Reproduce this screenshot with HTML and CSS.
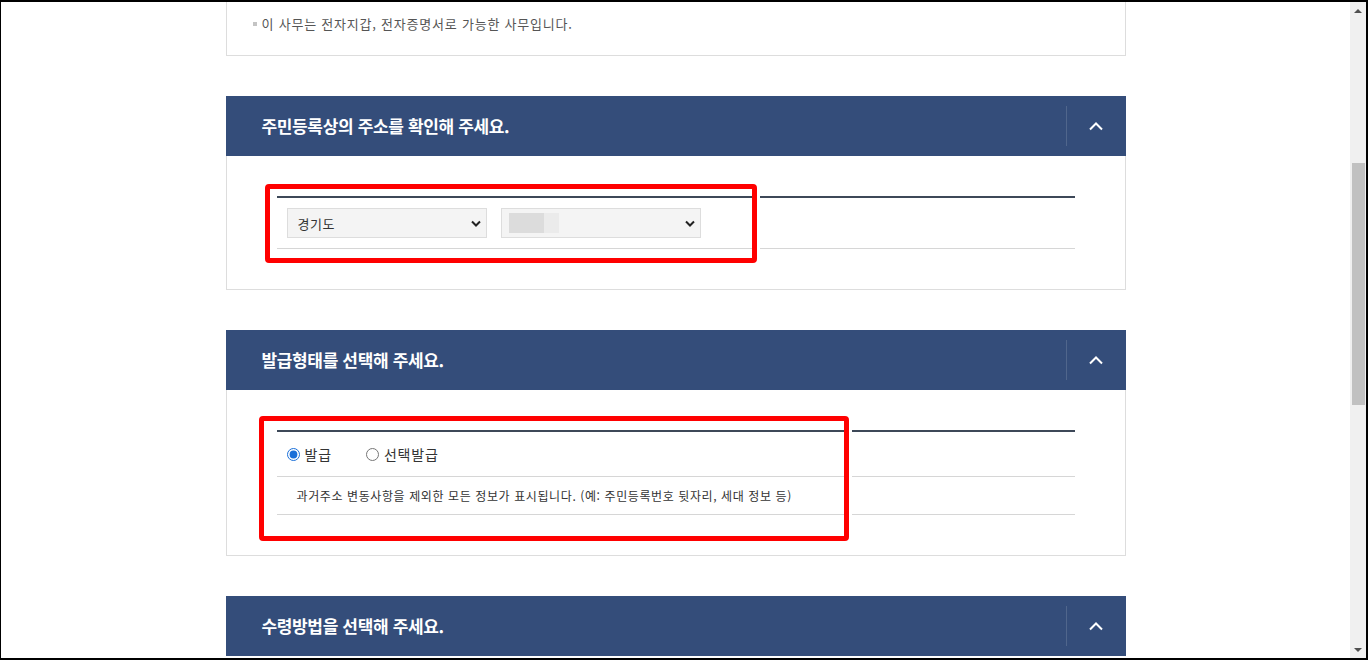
FILE: index.html
```html
<!DOCTYPE html>
<html lang="ko">
<head>
  <meta charset="UTF-8" />
  <meta name="viewport" content="width=device-width, initial-scale=1.0"/>
  <title>민원 신청</title>
  <link rel="stylesheet" href="styles.css">
</head>
<body>
  <div class="window">
    <div class="page">
      <div class="container">
        <ul class="notice">
          <li>이 사무는 전자지갑, 전자증명서로 가능한 사무입니다.</li>
        </ul>

        <section class="step">
          <div class="step-head">
            <h3 class="step-title">주민등록상의 주소를 확인해 주세요.</h3>
            <button class="toggle" type="button">
              <svg width="16" height="10" viewBox="0 0 16 10"><polyline points="2,8.5 8,2.5 14,8.5" fill="none" stroke="#fff" stroke-width="2"/></svg>
            </button>
          </div>
          <div class="step-body">
            <div class="form-table">
              <div class="form-row row-select">
                <div class="select-box">
                  <select><option>경기도</option></select>
                  <svg class="arrow-down" width="10" height="7" viewBox="0 0 10 7"><polyline points="1,1.5 5,5.5 9,1.5" fill="none" stroke="#222" stroke-width="2"/></svg>
                </div>
                <div class="select-box">
                  <select><option></option></select>
                  <span class="blur"></span>
                  <svg class="arrow-down" width="10" height="7" viewBox="0 0 10 7"><polyline points="1,1.5 5,5.5 9,1.5" fill="none" stroke="#222" stroke-width="2"/></svg>
                </div>
              </div>
            </div>
            <div class="mark mark-address"></div>
          </div>
        </section>

        <section class="step">
          <div class="step-head">
            <h3 class="step-title">발급형태를 선택해 주세요.</h3>
            <button class="toggle" type="button">
              <svg width="16" height="10" viewBox="0 0 16 10"><polyline points="2,8.5 8,2.5 14,8.5" fill="none" stroke="#fff" stroke-width="2"/></svg>
            </button>
          </div>
          <div class="step-body">
            <div class="form-table">
              <div class="form-row row-radio">
                <label class="radio"><input type="radio" name="type" checked> 발급</label>
                <label class="radio"><input type="radio" name="type"> 선택발급</label>
              </div>
              <div class="form-row row-desc">
                과거주소 변동사항을 제외한 모든 정보가 표시됩니다. (예: 주민등록번호 뒷자리, 세대 정보 등)
              </div>
            </div>
            <div class="mark mark-type"></div>
          </div>
        </section>

        <section class="step">
          <div class="step-head">
            <h3 class="step-title">수령방법을 선택해 주세요.</h3>
            <button class="toggle" type="button">
              <svg width="16" height="10" viewBox="0 0 16 10"><polyline points="2,8.5 8,2.5 14,8.5" fill="none" stroke="#fff" stroke-width="2"/></svg>
            </button>
          </div>
        </section>
      </div>
    </div>

    <div class="scrollbar">
      <div class="scroll-btn"><span class="tri-up"></span></div>
      <div class="scroll-track"><div class="scroll-thumb"></div></div>
      <div class="scroll-btn"><span class="tri-down"></span></div>
    </div>
  </div>
</body>
</html>
```

FILE: styles.css
```css
* {
  box-sizing: border-box;
}
body {
  font-family: "Noto Sans CJK KR", "Malgun Gothic", sans-serif;
  color: #333;
  background-color: #fff;
  margin: 0;
  padding: 0;
}
.window {
  height: 660px;
  border: solid #000;
  border-width: 2px 2px 2px 1px;
  display: flex;
  overflow: hidden;
}
.page {
  flex: 1;
  overflow: hidden;
  background-color: #fff;
}
.container {
  width: 900px;
  margin: 0 auto;
}

/* notice */
.notice {
  list-style: none;
  margin: 0;
  border: 1px solid #ddd;
  border-top: none;
  padding: 12px 26px 21px;
  font-size: 13px;
  line-height: 20px;
  letter-spacing: 0.78px;
  color: #555;
}
.notice li {
  display: flex;
  align-items: center;
  gap: 5px;
}
.notice li::before {
  content: "";
  width: 4px;
  height: 4px;
  background-color: #c4c4c4;
}

/* step */
.step {
  margin-top: 40px;
}
.step-head {
  display: flex;
  height: 60px;
  background-color: #344d7a;
}
.step-title {
  flex: 1;
  margin: 0;
  padding-left: 36px;
  font-size: 17px;
  font-weight: 700;
  line-height: 60px;
  letter-spacing: -0.35px;
  color: #fff;
}
.toggle {
  width: 60px;
  margin: 10px 0;
  padding: 0;
  border: none;
  border-left: 1px solid rgba(255,255,255,0.14);
  background: none;
  display: flex;
  align-items: center;
  justify-content: center;
  cursor: pointer;
}
.step-body {
  position: relative;
  border: 1px solid #ddd;
  border-top: none;
  padding: 40px 50px;
}
.form-table {
  border-top: 2px solid #3d4858;
}
.form-row {
  display: flex;
  align-items: center;
  border-bottom: 1px solid #d6d6d6;
  padding-left: 10px;
}
.row-select {
  height: 51px;
  gap: 14px;
}
.row-radio {
  height: 45px;
  gap: 34px;
}
.row-desc {
  height: 38px;
  padding-left: 20px;
  font-size: 12px;
  letter-spacing: 0.6px;
}

/* select */
.select-box {
  position: relative;
  width: 200px;
  height: 30px;
}
.select-box select {
  width: 100%;
  height: 100%;
  appearance: none;
  -webkit-appearance: none;
  border: 1px solid #ddd;
  border-radius: 0;
  background-color: #f4f4f4;
  padding: 0 10px;
  font-family: inherit;
  font-size: 13px;
  letter-spacing: 0.5px;
  color: #333;
}
.arrow-down {
  position: absolute;
  right: 6px;
  top: 12px;
  pointer-events: none;
}
.blur {
  position: absolute;
  left: 8px;
  top: 5px;
  width: 50px;
  height: 20px;
  background: linear-gradient(90deg, #dcdcdc 0 35px, #ebebeb 35px);
}

/* radio */
.radio {
  display: inline-flex;
  align-items: center;
  gap: 5px;
  font-size: 14px;
  letter-spacing: 0.8px;
}
.radio input {
  margin: 0;
  width: 13px;
  height: 13px;
  accent-color: #1a6fd8;
}

/* highlight boxes */
.mark {
  position: absolute;
  border: 5px solid #f00;
  border-radius: 4px;
  box-shadow: 0 0 0 3px #fff;
  pointer-events: none;
}
.mark-address {
  top: 28px;
  left: 38px;
  width: 492px;
  height: 79px;
}
.mark-type {
  top: 26px;
  left: 32px;
  width: 590px;
  height: 125px;
}

/* scrollbar */
.scrollbar {
  width: 16px;
  background-color: #f0f0f0;
  display: flex;
  flex-direction: column;
}
.scroll-btn {
  height: 17px;
  display: flex;
  align-items: center;
  justify-content: center;
}
.tri-up {
  border-left: 4px solid transparent;
  border-right: 4px solid transparent;
  border-bottom: 4px solid #505050;
}
.tri-down {
  border-left: 4px solid transparent;
  border-right: 4px solid transparent;
  border-top: 4px solid #505050;
}
.scroll-track {
  flex: 1;
  padding: 0 1px 0 2px;
}
.scroll-thumb {
  margin-top: 144px;
  height: 242px;
  background-color: #c1c1c1;
}
```
